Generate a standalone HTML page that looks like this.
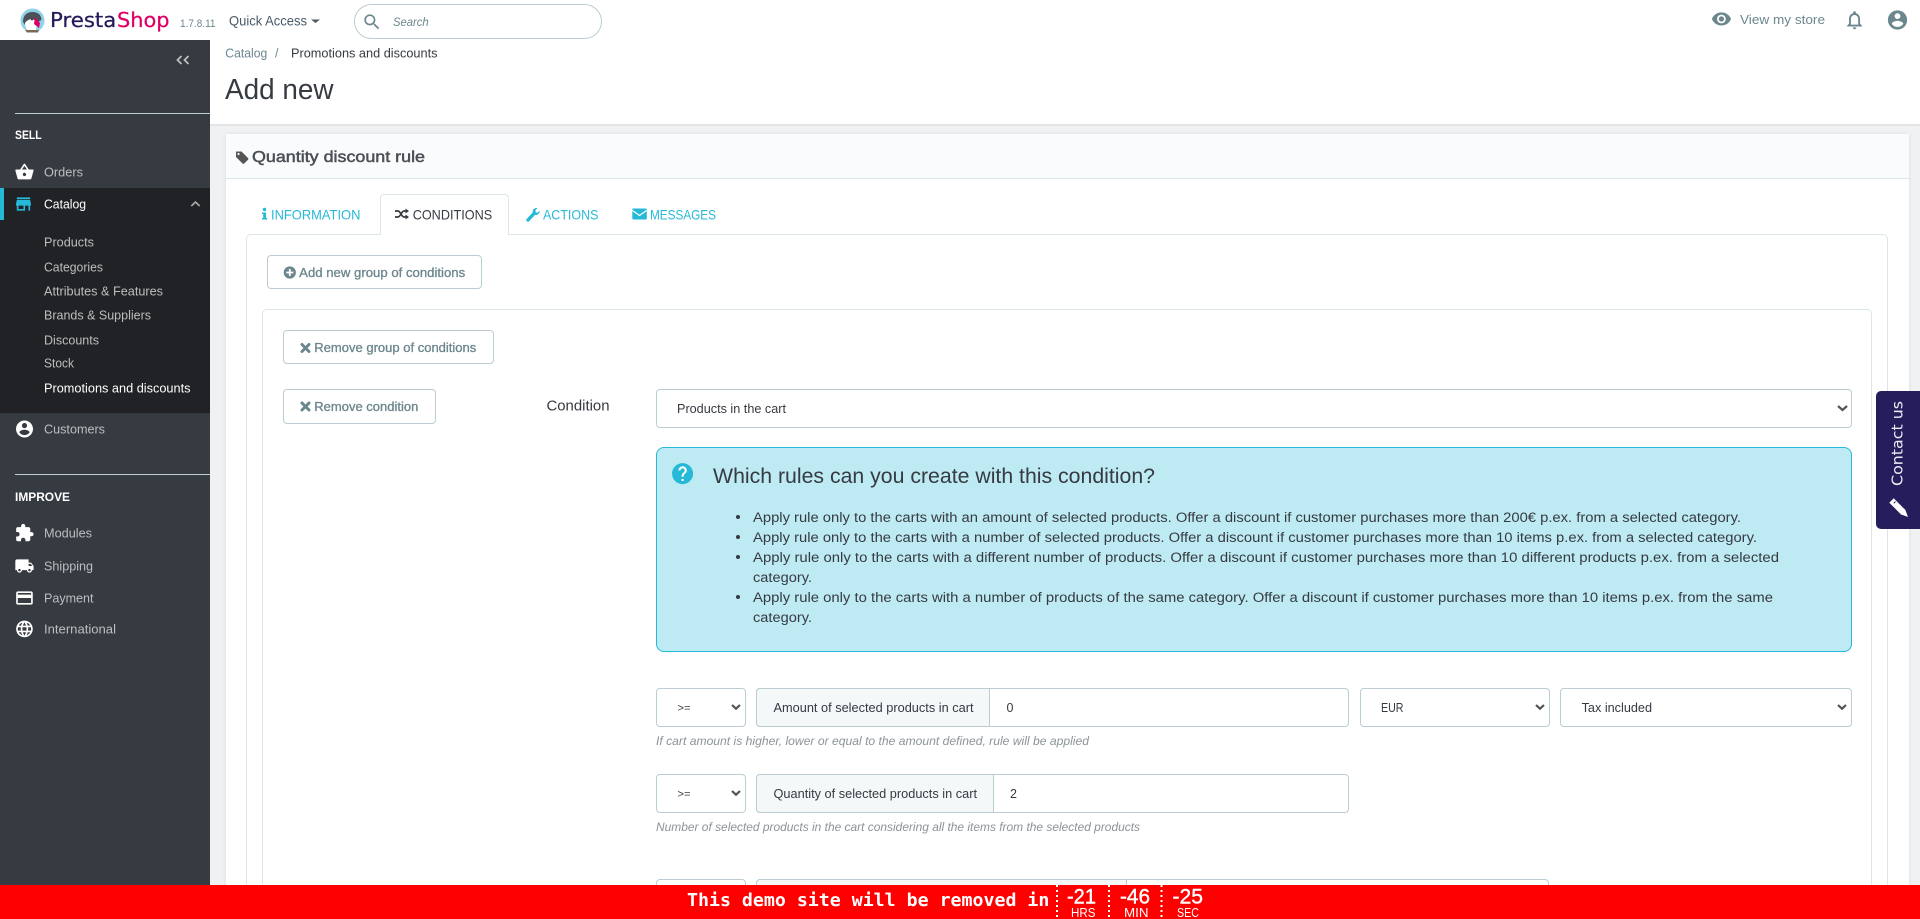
<!DOCTYPE html>
<html lang="en">
<head>
<meta charset="utf-8">
<title>Add new - PrestaShop</title>
<style>
html,body{margin:0;padding:0;width:1920px;height:919px;overflow:hidden;background:#eff1f2;font-family:"Liberation Sans",sans-serif}
#p{position:absolute;left:0;top:0;width:1920px;height:919px;overflow:hidden;background:#eff1f2}
.b{position:absolute;box-sizing:border-box}
.f{background:#fff;border:1px solid #bbcdd2;border-radius:4px}
.a{background:#f4f8f9;border:1px solid #bbcdd2;border-radius:4px 0 0 4px}
svg{position:absolute;left:0;top:0}
text{font-family:"Liberation Sans",sans-serif;font-size:12.5px;fill:#363a41;white-space:pre}
.s text{fill:#bebebe;font-size:13px}
.g{fill:#6c868e}
.semi{stroke:currentColor;stroke-width:.3px}
.btn{fill:#6c868e;color:#6c868e;font-size:12.5px}
.blue{fill:#25b9d7;font-size:14px}
.hint{font-style:italic;fill:#8a9499;font-size:12px}
.li{font-size:13.5px}
</style>
</head>
<body>
<div id="p">
<header class="b" style="left:0;top:0;width:1920px;height:40px;background:#fff"></header>
<div class="b" style="left:354px;top:4px;width:248px;height:35px;border:1px solid #bbcdd2;border-radius:18px;background:#fff"></div>

<nav class="b" style="left:0;top:40px;width:210px;height:879px;background:#363a41"></nav>
<div class="b" style="left:15px;top:113px;width:195px;height:1px;background:#bbcdd2"></div>
<div class="b" style="left:0;top:188px;width:210px;height:225px;background:#202226"></div>
<div class="b" style="left:0;top:188px;width:4px;height:32px;background:#25b9d7"></div>
<div class="b" style="left:15px;top:474px;width:195px;height:1px;background:#bbcdd2"></div>

<div class="b" style="left:210px;top:40px;width:1710px;height:86px;background:#fff;border-bottom:2px solid #e2e4e5"></div>

<main class="b" style="left:226px;top:134px;width:1683px;height:800px;background:#fff;border-radius:3px;box-shadow:0 0 4px rgba(0,0,0,.08)"></main>
<div class="b" style="left:226px;top:134px;width:1683px;height:45px;background:#fafbfc;border-bottom:1px solid #dbe6e9"></div>
<div class="b" style="left:246px;top:234px;width:1642px;height:700px;border:1px solid #dbe6e9;border-radius:5px"></div>
<div class="b" style="left:380px;top:194px;width:129px;height:41px;background:#fff;border:1px solid #dbe6e9;border-bottom:0;border-radius:4px 4px 0 0"></div>
<div class="b" style="left:262px;top:309px;width:1610px;height:640px;border:1px solid #dbe6e9;border-radius:5px"></div>

<div class="b f" style="left:267px;top:255px;width:215px;height:34px"></div>
<div class="b f" style="left:283px;top:330px;width:211px;height:34px"></div>
<div class="b f" style="left:283px;top:389px;width:153px;height:35px"></div>

<div class="b f" style="left:656px;top:389px;width:1196px;height:39px"></div>
<div class="b" style="left:656px;top:447px;width:1196px;height:205px;background:#beeaf3;border:1px solid #25b9d7;border-radius:8px"></div>

<div class="b f" style="left:656px;top:688px;width:90px;height:39px"></div>
<div class="b f" style="left:756px;top:688px;width:593px;height:39px"></div>
<div class="b a" style="left:756px;top:688px;width:234px;height:39px"></div>
<div class="b f" style="left:1360px;top:688px;width:190px;height:39px"></div>
<div class="b f" style="left:1560px;top:688px;width:292px;height:39px"></div>

<div class="b f" style="left:656px;top:774px;width:90px;height:39px"></div>
<div class="b f" style="left:756px;top:774px;width:593px;height:39px"></div>
<div class="b a" style="left:756px;top:774px;width:238px;height:39px"></div>

<div class="b f" style="left:656px;top:879px;width:90px;height:39px"></div>
<div class="b f" style="left:756px;top:879px;width:793px;height:39px"></div>
<div class="b a" style="left:756px;top:879px;width:371px;height:39px"></div>

<svg width="1920" height="919" viewBox="0 0 1920 919">
  <!-- logo -->
  <circle cx="32.5" cy="20.5" r="12" fill="#8fd3e8"/>
  <path d="M23 22c0-7 4-10 9.500-10s9 3 9 8l-4 2-5-3-5 2-1 6z" fill="#4c5258"/>
  <path d="M25 23c2-3 6-5 9-3l3 3-1 7-8 1c-2-2-3-5-3-8z" fill="#fff"/>
  <path d="M35 17l5 6-1 5-5-4z" fill="#df0067"/>
  <path d="M25 30h14l-1 2.500H27z" fill="#7d6a55"/>
  <circle cx="32" cy="19.500" r="1" fill="#363a41"/>
  <text x="50" y="27" textLength="66.300" lengthAdjust="spacingAndGlyphs" style="font-family:'DejaVu Sans',sans-serif;font-size:20px;fill:#251b5b;stroke:#251b5b;stroke-width:.25px">Presta</text>
  <text x="117" y="27" textLength="52.500" lengthAdjust="spacingAndGlyphs" style="font-family:'DejaVu Sans',sans-serif;font-size:20px;fill:#df0067;stroke:#df0067;stroke-width:.25px">Shop</text>
  <text x="180" y="27" textLength="35.500" lengthAdjust="spacingAndGlyphs" style="font-size:11px;fill:#6c868e">1.7.8.11</text>
  <text x="229" y="25.500" textLength="78" lengthAdjust="spacingAndGlyphs" style="font-size:14px;fill:#4a5a66">Quick Access</text>
  <path d="M311 19.500h9l-4.500 3.500z" fill="#4a5a66"/>
  <g transform="translate(361.800,11.800) scale(.85)"><path fill="#6c868e" d="M15.500 14h-.79l-.28-.27C15.410 12.590 16 11.110 16 9.500 16 5.910 13.090 3 9.500 3S3 5.910 3 9.500 5.910 16 9.500 16c1.610 0 3.090-.59 4.230-1.570l.27.28v.79l5 4.990L20.490 19l-4.990-5zm-6 0C7.010 14 5 11.990 5 9.500S7.010 5 9.500 5 14 7.010 14 9.500 11.990 14 9.500 14z"/></g>
  <text x="393" y="26" textLength="35.600" lengthAdjust="spacingAndGlyphs" style="font-size:12px;font-style:italic;fill:#6c868e">Search</text>

  <!-- top right -->
  <g transform="translate(1711,8.500) scale(.87)"><path fill="#6c868e" d="M12 4.500C7 4.500 2.730 7.610 1 12c1.730 4.390 6 7.500 11 7.500s9.270-3.110 11-7.500c-1.730-4.390-6-7.500-11-7.500zM12 17c-2.760 0-5-2.240-5-5s2.240-5 5-5 5 2.240 5 5-2.240 5-5 5zm0-8c-1.660 0-3 1.340-3 3s1.340 3 3 3 3-1.340 3-3-1.340-3-3-3z"/></g>
  <text x="1740" y="24" textLength="85" lengthAdjust="spacingAndGlyphs" style="font-size:13px;fill:#6c868e">View my store</text>
  <g transform="translate(1843.500,9) scale(.92)"><path fill="#6c868e" d="M12 22c1.100 0 2-.9 2-2h-4c0 1.100.9 2 2 2zm6-6v-5c0-3.070-1.630-5.640-4.500-6.320V4c0-.83-.67-1.500-1.500-1.500s-1.500.67-1.500 1.500v.68C7.640 5.360 6 7.920 6 11v5l-2 2v1h16v-1l-2-2zm-2 1H8v-6c0-2.480 1.510-4.500 4-4.500s4 2.020 4 4.500v6z"/></g>
  <g transform="translate(1886,8.500) scale(.96)"><path fill="#6c868e" d="M12 2C6.480 2 2 6.480 2 12s4.480 10 10 10 10-4.480 10-10S17.520 2 12 2zm0 3c1.660 0 3 1.340 3 3s-1.340 3-3 3-3-1.340-3-3 1.340-3 3-3zm0 14.200c-2.500 0-4.710-1.280-6-3.220.03-1.990 4-3.080 6-3.080 1.990 0 5.970 1.090 6 3.080-1.290 1.940-3.500 3.220-6 3.220z"/></g>

  <!-- sidebar -->
  <g class="s">
    <path d="M181.500 56l-4 4 4 4M188.500 56l-4 4 4 4" fill="none" stroke="#bebebe" stroke-width="1.800"/>
    <text x="15" y="139" textLength="26.600" lengthAdjust="spacingAndGlyphs" style="font-size:11.500px;font-weight:700;fill:#fff">SELL</text>
    <g transform="translate(14.500,162) scale(.83)"><path fill="#fff" d="M17.210 9l-4.380-6.560c-.19-.28-.51-.42-.83-.42-.32 0-.64.140-.83.430L6.790 9H2c-.55 0-1 .45-1 1 0 .09.01.18.04.27l2.540 9.270c.23.84 1 1.460 1.920 1.460h13c.92 0 1.690-.62 1.930-1.460l2.540-9.270L23 10c0-.55-.45-1-1-1h-4.790zM9 9l3-4.400L15 9H9zm3 8c-1.100 0-2-.9-2-2s.9-2 2-2 2 .9 2 2-.9 2-2 2z"/></g>
    <text x="44" y="176.500" textLength="39" lengthAdjust="spacingAndGlyphs">Orders</text>
    <g transform="translate(13.500,194) scale(.83)"><path fill="#25b9d7" d="M20 4H4v2h16V4zm1 10v-2l-1-5H4l-1 5v2h1v6h10v-6h4v6h2v-6h1zm-9 4H6v-4h6v4z"/></g>
    <text x="44" y="208.500" textLength="42" lengthAdjust="spacingAndGlyphs" style="fill:#fff">Catalog</text>
    <path d="M191.300 206l4.200-4 4.200 4" fill="none" stroke="#aaa" stroke-width="1.600"/>
    <text x="44" y="246.500" textLength="50" lengthAdjust="spacingAndGlyphs">Products</text>
    <text x="44" y="271.500" textLength="59" lengthAdjust="spacingAndGlyphs">Categories</text>
    <text x="44" y="295.500" textLength="119" lengthAdjust="spacingAndGlyphs">Attributes &amp; Features</text>
    <text x="44" y="319.500" textLength="107" lengthAdjust="spacingAndGlyphs">Brands &amp; Suppliers</text>
    <text x="44" y="344.500" textLength="55" lengthAdjust="spacingAndGlyphs">Discounts</text>
    <text x="44" y="367.500" textLength="30" lengthAdjust="spacingAndGlyphs">Stock</text>
    <text x="44" y="392.500" textLength="146.500" lengthAdjust="spacingAndGlyphs" style="fill:#fff">Promotions and discounts</text>
    <g transform="translate(14.300,418.800) scale(.85)"><path fill="#fff" d="M12 2C6.480 2 2 6.480 2 12s4.480 10 10 10 10-4.480 10-10S17.520 2 12 2zm0 3c1.660 0 3 1.340 3 3s-1.340 3-3 3-3-1.340-3-3 1.340-3 3-3zm0 14.200c-2.500 0-4.710-1.280-6-3.220.03-1.990 4-3.080 6-3.080 1.990 0 5.970 1.090 6 3.080-1.290 1.940-3.500 3.220-6 3.220z"/></g>
    <text x="44" y="433.500" textLength="61" lengthAdjust="spacingAndGlyphs">Customers</text>
    <text x="15" y="501" textLength="55" lengthAdjust="spacingAndGlyphs" style="font-size:11.500px;font-weight:700;fill:#fff">IMPROVE</text>
    <g transform="translate(14.500,523) scale(.83)"><path fill="#fff" d="M20.500 11H19V7c0-1.100-.9-2-2-2h-4V3.500C13 2.120 11.880 1 10.500 1S8 2.120 8 3.500V5H4c-1.100 0-1.990.9-1.990 2v3.800H3.500c1.490 0 2.700 1.210 2.700 2.700s-1.210 2.700-2.700 2.700H2V20c0 1.100.9 2 2 2h3.800v-1.500c0-1.490 1.210-2.700 2.700-2.700 1.490 0 2.700 1.210 2.700 2.700V22H17c1.100 0 2-.9 2-2v-4h1.500c1.380 0 2.500-1.120 2.500-2.500S21.880 11 20.500 11z"/></g>
    <text x="44" y="537.500" textLength="48" lengthAdjust="spacingAndGlyphs">Modules</text>
    <g transform="translate(14.500,556) scale(.83)"><path fill="#fff" d="M20 8h-3V4H3c-1.100 0-2 .9-2 2v11h2c0 1.660 1.340 3 3 3s3-1.340 3-3h6c0 1.660 1.340 3 3 3s3-1.340 3-3h2v-5l-3-4zM6 18.500c-.83 0-1.500-.67-1.500-1.500s.67-1.500 1.500-1.500 1.500.67 1.500 1.500-.67 1.500-1.500 1.500zm13.500-9l1.960 2.500H17V9.500h2.500zm-1.500 9c-.83 0-1.500-.67-1.500-1.500s.67-1.500 1.500-1.500 1.500.67 1.500 1.500-.67 1.500-1.500 1.500z"/></g>
    <text x="44" y="570.500" textLength="49" lengthAdjust="spacingAndGlyphs">Shipping</text>
    <g transform="translate(14.500,588) scale(.83)"><path fill="#fff" d="M20 4H4c-1.110 0-1.990.89-1.990 2L2 18c0 1.110.89 2 2 2h16c1.110 0 2-.89 2-2V6c0-1.110-.89-2-2-2zm0 14H4v-6h16v6zm0-10H4V6h16v2z"/></g>
    <text x="44" y="602.500" textLength="49.500" lengthAdjust="spacingAndGlyphs">Payment</text>
    <g transform="translate(14.500,619) scale(.83)"><path fill="#fff" d="M11.990 2C6.470 2 2 6.480 2 12s4.470 10 9.990 10C17.520 22 22 17.520 22 12S17.520 2 11.990 2zm6.930 6h-2.950c-.32-1.250-.78-2.450-1.380-3.560 1.840.63 3.370 1.910 4.330 3.560zM12 4.040c.83 1.200 1.480 2.530 1.910 3.960h-3.820c.43-1.430 1.080-2.760 1.910-3.960zM4.260 14C4.100 13.360 4 12.690 4 12s.1-1.360.26-2h3.380c-.08.66-.14 1.320-.14 2 0 .68.06 1.340.14 2H4.260zm.82 2h2.950c.32 1.250.78 2.450 1.380 3.560-1.840-.63-3.370-1.900-4.330-3.560zm2.950-8H5.080c.96-1.660 2.490-2.930 4.330-3.560C8.810 5.550 8.350 6.750 8.030 8zM12 19.960c-.83-1.200-1.480-2.530-1.910-3.960h3.820c-.43 1.430-1.080 2.760-1.910 3.960zM14.340 14H9.660c-.09-.66-.16-1.320-.16-2 0-.68.07-1.350.16-2h4.680c.09.650.16 1.320.16 2 0 .68-.07 1.340-.16 2zm.25 5.560c.6-1.110 1.060-2.310 1.380-3.560h2.950c-.96 1.650-2.490 2.930-4.330 3.560zM16.360 14c.08-.66.14-1.320.14-2 0-.68-.06-1.340-.14-2h3.380c.16.64.26 1.310.26 2s-.1 1.360-.26 2h-3.380z"/></g>
    <text x="44" y="633.500" textLength="72" lengthAdjust="spacingAndGlyphs">International</text>
  </g>

  <!-- page head -->
  <text x="225.300" y="57.500" textLength="42" lengthAdjust="spacingAndGlyphs" style="fill:#6c868e">Catalog</text>
  <text x="275" y="57.500" style="fill:#6c868e">/</text>
  <text x="291" y="57.500" textLength="146.500" lengthAdjust="spacingAndGlyphs">Promotions and discounts</text>
  <text x="225" y="99" textLength="108.500" lengthAdjust="spacingAndGlyphs" style="font-size:29px">Add new</text>

  <!-- panel head -->
  <path d="M236 151.500h5.500l6.500 6.500c.5.500.5 1.200 0 1.700l-3.800 3.800c-.5.5-1.200.5-1.700 0l-6.500-6.500z" fill="#555"/>
  <circle cx="238.500" cy="154" r="1.100" fill="#fafbfc"/>
  <text x="252" y="162" textLength="173" lengthAdjust="spacingAndGlyphs" style="font-size:16px;fill:#4b5056;stroke:#4b5056;stroke-width:.5px">Quantity discount rule</text>

  <!-- tabs -->
  <circle cx="264.500" cy="209.500" r="1.700" fill="#25b9d7"/><path d="M262 212.500h4v5.500h1.200v1.500H262V218h1.200v-4H262z" fill="#25b9d7"/>
  <text x="271" y="219.500" textLength="89.400" lengthAdjust="spacingAndGlyphs" class="blue">INFORMATION</text>
  <path d="M395 211h3c2.500 0 3.500 6 6 6h2M395 217h3c2.500 0 3.500-6 6-6h2" fill="none" stroke="#363a41" stroke-width="1.700"/>
  <path d="M405.500 208.500l3.500 2.500-3.500 2.500zM405.500 214.500l3.500 2.500-3.500 2.500z" fill="#363a41"/>
  <text x="412.700" y="219.500" textLength="79.500" lengthAdjust="spacingAndGlyphs" style="font-size:14px">CONDITIONS</text>
  <path d="M528 220l6-6.500" stroke="#25b9d7" stroke-width="3.400" stroke-linecap="round" fill="none"/>
  <path d="M539.700 210.500c.3 2.600-1.800 4.800-4.300 4.500-2-.3-3-2.300-2.600-4.300.4-1.800 2.200-3 4.600-2.700l-2 2.200.4 2 2 .5z" fill="#25b9d7"/>
  <text x="543" y="219.500" textLength="55.400" lengthAdjust="spacingAndGlyphs" class="blue">ACTIONS</text>
  <rect x="632.300" y="208.500" width="14.500" height="11" rx="1" fill="#25b9d7"/>
  <path d="M632.500 210.500l7 5 7-5" fill="none" stroke="#fff" stroke-width="1.200"/>
  <text x="650" y="219.500" textLength="66" lengthAdjust="spacingAndGlyphs" class="blue">MESSAGES</text>

  <!-- buttons -->
  <circle cx="289.800" cy="272.500" r="6.100" fill="#6c868e"/>
  <path d="M289.800 269v7M286.300 272.500h7" stroke="#fff" stroke-width="1.800"/>
  <text x="299.200" y="277" textLength="166" lengthAdjust="spacingAndGlyphs" class="btn semi">Add new group of conditions</text>
  <path d="M302 344.500l7 7M309 344.500l-7 7" stroke="#6c868e" stroke-width="3" stroke-linecap="round"/>
  <text x="314.300" y="352" textLength="162" lengthAdjust="spacingAndGlyphs" class="btn semi">Remove group of conditions</text>
  <path d="M302 403l7 7M309 403l-7 7" stroke="#6c868e" stroke-width="3" stroke-linecap="round"/>
  <text x="314.300" y="411" textLength="104" lengthAdjust="spacingAndGlyphs" class="btn semi">Remove condition</text>

  <text x="546.500" y="410.700" textLength="63" lengthAdjust="spacingAndGlyphs" style="font-size:14.500px">Condition</text>
  <text x="677" y="413" textLength="109" lengthAdjust="spacingAndGlyphs">Products in the cart</text>
  <path d="M1838 406l4.500 4 4.500-4" fill="none" stroke="#555" stroke-width="2.200"/>

  <!-- alert -->
  <circle cx="682.500" cy="473.500" r="8" fill="#fff"/>
  <g transform="translate(670,461) scale(1.050)"><path fill="#25b9d7" d="M12 2C6.480 2 2 6.480 2 12s4.480 10 10 10 10-4.480 10-10S17.520 2 12 2zm1 17h-2v-2h2v2zm2.070-7.750l-.9.920C13.450 12.900 13 13.500 13 15h-2v-.5c0-1.100.45-2.100 1.170-2.830l1.240-1.260c.37-.36.59-.86.59-1.410 0-1.100-.9-2-2-2s-2 .9-2 2H8c0-2.210 1.790-4 4-4s4 1.790 4 4c0 .88-.36 1.680-.93 2.250z"/></g>
  <text x="713" y="483" textLength="442" lengthAdjust="spacingAndGlyphs" style="font-size:21px">Which rules can you create with this condition?</text>
  <g fill="#363a41"><circle cx="738" cy="517" r="2"/><circle cx="738" cy="537" r="2"/><circle cx="738" cy="557" r="2"/><circle cx="738" cy="597" r="2"/></g>
  <text x="753" y="522" textLength="988" lengthAdjust="spacingAndGlyphs" class="li">Apply rule only to the carts with an amount of selected products. Offer a discount if customer purchases more than 200€ p.ex. from a selected category.</text>
  <text x="753" y="542" textLength="1004" lengthAdjust="spacingAndGlyphs" class="li">Apply rule only to the carts with a number of selected products. Offer a discount if customer purchases more than 10 items p.ex. from a selected category.</text>
  <text x="753" y="562" textLength="1026" lengthAdjust="spacingAndGlyphs" class="li">Apply rule only to the carts with a different number of products. Offer a discount if customer purchases more than 10 different products p.ex. from a selected</text>
  <text x="753" y="582" textLength="59" lengthAdjust="spacingAndGlyphs" class="li">category.</text>
  <text x="753" y="602" textLength="1020" lengthAdjust="spacingAndGlyphs" class="li">Apply rule only to the carts with a number of products of the same category. Offer a discount if customer purchases more than 10 items p.ex. from the same</text>
  <text x="753" y="622" textLength="59" lengthAdjust="spacingAndGlyphs" class="li">category.</text>

  <!-- row 1 -->
  <text x="677.500" y="711.500" textLength="13" lengthAdjust="spacingAndGlyphs" style="font-size:11px">&gt;=</text>
  <path d="M732 705l4 3.700 4-3.700" fill="none" stroke="#555" stroke-width="2.200"/>
  <text x="773.500" y="712" textLength="200" lengthAdjust="spacingAndGlyphs">Amount of selected products in cart</text>
  <text x="1006.500" y="712">0</text>
  <text x="1381" y="712" textLength="22.500" lengthAdjust="spacingAndGlyphs">EUR</text>
  <path d="M1536 705l4 3.700 4-3.700" fill="none" stroke="#555" stroke-width="2.200"/>
  <text x="1581.600" y="712" textLength="70.400" lengthAdjust="spacingAndGlyphs">Tax included</text>
  <path d="M1838 705l4 3.700 4-3.700" fill="none" stroke="#555" stroke-width="2.200"/>
  <text x="656" y="745" textLength="433" lengthAdjust="spacingAndGlyphs" class="hint">If cart amount is higher, lower or equal to the amount defined, rule will be applied</text>

  <!-- row 2 -->
  <text x="677.500" y="797.500" textLength="13" lengthAdjust="spacingAndGlyphs" style="font-size:11px">&gt;=</text>
  <path d="M732 791l4 3.700 4-3.700" fill="none" stroke="#555" stroke-width="2.200"/>
  <text x="773.500" y="798" textLength="203.500" lengthAdjust="spacingAndGlyphs">Quantity of selected products in cart</text>
  <text x="1010" y="798">2</text>
  <text x="656" y="831" textLength="484" lengthAdjust="spacingAndGlyphs" class="hint">Number of selected products in the cart considering all the items from the selected products</text>

  <!-- contact tab -->
  <path d="M1920 391h-39a5 5 0 0 0-5 5v128a5 5 0 0 0 5 5h39z" fill="#261e5c"/>
  <text transform="translate(1902.500,486) rotate(-90)" textLength="85" lengthAdjust="spacingAndGlyphs" style="font-family:'DejaVu Sans',sans-serif;font-size:15px;fill:#eceaf3">Contact us</text>
  <path d="M1891.500 500.500l11.500 11.500" stroke="#fff" stroke-width="6.200" fill="none"/>
  <path d="M1905.200 509.500l2.800 7.500-7.500-2.800z" fill="#fff"/>
  <path d="M1893.700 503.300l1.800-1.800" stroke="#261e5c" stroke-width="1"/>

  <!-- demo bar -->
  <rect x="0" y="885" width="1920" height="34" fill="#f00"/>
  <text x="687" y="906" textLength="362.400" lengthAdjust="spacingAndGlyphs" style="font-family:'DejaVu Sans Mono',monospace;font-weight:700;font-size:18px;fill:#fff">This demo site will be removed in</text>
  <path d="M1057 885v34M1109 885v34M1161.500 885v34" stroke="#fff" stroke-width="2" stroke-dasharray="2 3"/>
  <text x="1067" y="903.500" textLength="29" lengthAdjust="spacingAndGlyphs" style="font-size:21px;fill:#fff;stroke:#fff;stroke-width:.4px">-21</text>
  <text x="1071" y="917" textLength="24.500" lengthAdjust="spacingAndGlyphs" style="font-size:13px;fill:#fff">HRS</text>
  <text x="1120" y="903.500" textLength="30" lengthAdjust="spacingAndGlyphs" style="font-size:21px;fill:#fff;stroke:#fff;stroke-width:.4px">-46</text>
  <text x="1124" y="917" textLength="24.500" lengthAdjust="spacingAndGlyphs" style="font-size:13px;fill:#fff">MIN</text>
  <text x="1172.500" y="903.500" textLength="30.500" lengthAdjust="spacingAndGlyphs" style="font-size:21px;fill:#fff;stroke:#fff;stroke-width:.4px">-25</text>
  <text x="1177" y="917" textLength="22" lengthAdjust="spacingAndGlyphs" style="font-size:13px;fill:#fff">SEC</text>
</svg>
</div>
</body>
</html>
